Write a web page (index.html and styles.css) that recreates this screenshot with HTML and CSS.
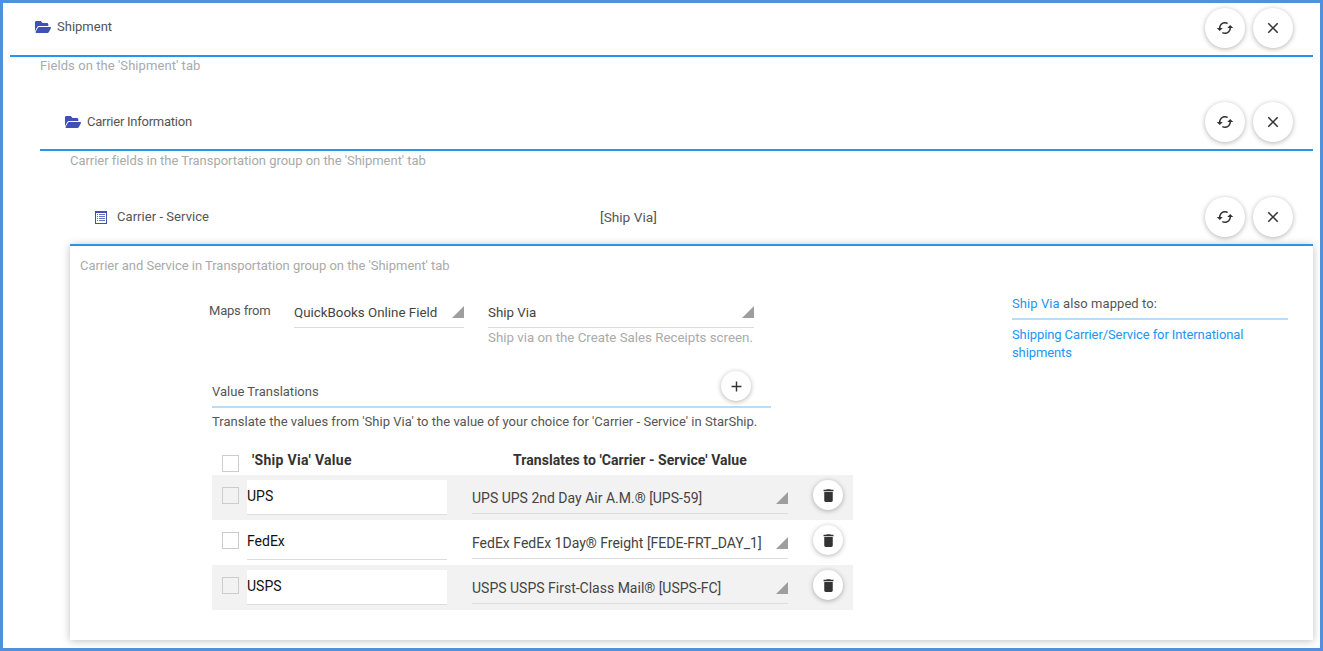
FILE: index.html
```html
<!DOCTYPE html>
<html>

<head>
    <title>Field Mapping</title>
    <link rel="stylesheet" href="styles.css">
</head>

<body>
    <div class="frame">
        <div class="node node-top">
            <div class="node-head">
                <svg class="head-icon" viewBox="0 64 576 384" preserveAspectRatio="none"><path d="M572.694 292.093L500.27 416.248A63.997 63.997 0 0 1 444.989 448H45.025c-18.523 0-30.064-20.093-20.731-36.093l72.424-124.155A64 64 0 0 1 152 256h399.964c18.523 0 30.064 20.093 20.73 36.093zM152 224h328v-48c0-26.51-21.49-48-48-48H272l-64-64H48C21.49 64 0 85.49 0 112v278.046l69.077-118.418C86.214 242.25 117.989 224 152 224z"/></svg>
                <span class="head-title">Shipment</span>
                <div class="head-actions">
                    <button class="round-btn"><svg viewBox="0 0 24 24"><path d="M19 8l-4 4h3c0 3.31-2.69 6-6 6-1.01 0-1.97-.25-2.8-.7l-1.46 1.46C8.97 19.54 10.43 20 12 20c4.42 0 8-3.58 8-8h3l-4-4zM6 12c0-3.31 2.69-6 6-6 1.01 0 1.97.25 2.8.7l1.46-1.46C15.03 4.46 13.57 4 12 4c-4.42 0-8 3.58-8 8H1l4 4 4-4H6z"/></svg></button>
                    <button class="round-btn"><svg viewBox="0 0 24 24"><path d="M19 6.41L17.59 5 12 10.59 6.41 5 5 6.41 10.59 12 5 17.59 6.41 19 12 13.41 17.59 19 19 17.59 13.41 12z"/></svg></button>
                </div>
            </div>
            <div class="node-desc desc-top">Fields on the 'Shipment' tab</div>

            <div class="node node-child">
                <div class="node-head">
                    <svg class="head-icon" viewBox="0 64 576 384" preserveAspectRatio="none"><path d="M572.694 292.093L500.27 416.248A63.997 63.997 0 0 1 444.989 448H45.025c-18.523 0-30.064-20.093-20.731-36.093l72.424-124.155A64 64 0 0 1 152 256h399.964c18.523 0 30.064 20.093 20.73 36.093zM152 224h328v-48c0-26.51-21.49-48-48-48H272l-64-64H48C21.49 64 0 85.49 0 112v278.046l69.077-118.418C86.214 242.25 117.989 224 152 224z"/></svg>
                    <span class="head-title title-carrier">Carrier Information</span>
                    <div class="head-actions">
                        <button class="round-btn"><svg viewBox="0 0 24 24"><path d="M19 8l-4 4h3c0 3.31-2.69 6-6 6-1.01 0-1.97-.25-2.8-.7l-1.46 1.46C8.97 19.54 10.43 20 12 20c4.42 0 8-3.58 8-8h3l-4-4zM6 12c0-3.31 2.69-6 6-6 1.01 0 1.97.25 2.8.7l1.46-1.46C15.03 4.46 13.57 4 12 4c-4.42 0-8 3.58-8 8H1l4 4 4-4H6z"/></svg></button>
                        <button class="round-btn"><svg viewBox="0 0 24 24"><path d="M19 6.41L17.59 5 12 10.59 6.41 5 5 6.41 10.59 12 5 17.59 6.41 19 12 13.41 17.59 19 19 17.59 13.41 12z"/></svg></button>
                    </div>
                </div>
                <div class="node-desc desc-child">Carrier fields in the Transportation group on the 'Shipment' tab</div>

                <div class="node node-child node-leaf">
                    <div class="node-head">
                        <svg class="list-icon" viewBox="0 0 12 13">
                            <path class="list-frame" d="M0 0h12v13H0zM1 2v10h10V2z" fill-rule="evenodd"/>
                            <path class="list-line" d="M2 3h1v1H2zM4 3h6v1H4zM2 5h1v1H2zM4 5h6v1H4zM2 7h1v1H2zM4 7h6v1H4zM2 9h1v1H2zM4 9h6v1H4z"/>
                        </svg>
                        <span class="head-title leaf-title">Carrier - Service</span>
                        <span class="head-value">[Ship Via]</span>
                        <div class="head-actions">
                            <button class="round-btn"><svg viewBox="0 0 24 24"><path d="M19 8l-4 4h3c0 3.31-2.69 6-6 6-1.01 0-1.97-.25-2.8-.7l-1.46 1.46C8.97 19.54 10.43 20 12 20c4.42 0 8-3.58 8-8h3l-4-4zM6 12c0-3.31 2.69-6 6-6 1.01 0 1.97.25 2.8.7l1.46-1.46C15.03 4.46 13.57 4 12 4c-4.42 0-8 3.58-8 8H1l4 4 4-4H6z"/></svg></button>
                            <button class="round-btn"><svg viewBox="0 0 24 24"><path d="M19 6.41L17.59 5 12 10.59 6.41 5 5 6.41 10.59 12 5 17.59 6.41 19 12 13.41 17.59 19 19 17.59 13.41 12z"/></svg></button>
                        </div>
                    </div>

                    <div class="card">
                        <div class="card-desc">Carrier and Service in Transportation group on the 'Shipment' tab</div>
                        <div class="card-body">
                            <div class="card-main">
                                <div class="maps-row">
                                    <span class="maps-label">Maps from</span>
                                    <div class="select select-source">
                                        <span>QuickBooks Online Field</span><i class="caret"></i>
                                    </div>
                                    <div class="select-wrap">
                                        <div class="select select-field">
                                            <span>Ship Via</span><i class="caret"></i>
                                        </div>
                                        <div class="hint">Ship via on the Create Sales Receipts screen.</div>
                                    </div>
                                </div>

                                <div class="vt-head">
                                    <span>Value Translations</span>
                                    <button class="round-btn small-btn"><svg viewBox="0 0 24 24"><path d="M19 13h-6v6h-2v-6H5v-2h6V5h2v6h6v2z"/></svg></button>
                                </div>
                                <div class="vt-note">Translate the values from 'Ship Via' to the value of your choice for 'Carrier - Service' in StarShip.</div>

                                <div class="vt-table">
                                    <div class="vt-columns">
                                        <span class="check"></span>
                                        <span class="col-from">'Ship Via' Value</span>
                                        <span class="col-to">Translates to 'Carrier - Service' Value</span>
                                    </div>
                                    <div class="vt-row">
                                        <span class="check"></span>
                                        <div class="value-input">UPS</div>
                                        <div class="select select-row"><span>UPS UPS 2nd Day Air A.M.® [UPS-59]</span><i class="caret"></i></div>
                                        <button class="round-btn small-btn"><svg viewBox="0 0 24 24"><path d="M6 19c0 1.1.9 2 2 2h8c1.1 0 2-.9 2-2V7H6v12zM19 4h-3.5l-1-1h-5l-1 1H5v2h14V4z"/></svg></button>
                                    </div>
                                    <div class="vt-row">
                                        <span class="check"></span>
                                        <div class="value-input">FedEx</div>
                                        <div class="select select-row"><span>FedEx FedEx 1Day® Freight [FEDE-FRT_DAY_1]</span><i class="caret"></i></div>
                                        <button class="round-btn small-btn"><svg viewBox="0 0 24 24"><path d="M6 19c0 1.1.9 2 2 2h8c1.1 0 2-.9 2-2V7H6v12zM19 4h-3.5l-1-1h-5l-1 1H5v2h14V4z"/></svg></button>
                                    </div>
                                    <div class="vt-row">
                                        <span class="check"></span>
                                        <div class="value-input">USPS</div>
                                        <div class="select select-row"><span>USPS USPS First-Class Mail® [USPS-FC]</span><i class="caret"></i></div>
                                        <button class="round-btn small-btn"><svg viewBox="0 0 24 24"><path d="M6 19c0 1.1.9 2 2 2h8c1.1 0 2-.9 2-2V7H6v12zM19 4h-3.5l-1-1h-5l-1 1H5v2h14V4z"/></svg></button>
                                    </div>
                                </div>
                            </div>

                            <div class="card-side">
                                <div class="side-head"><a class="link">Ship Via</a> also mapped to:</div>
                                <a class="link side-link">Shipping Carrier/Service for International shipments</a>
                            </div>
                        </div>
                    </div>
                </div>
            </div>
        </div>
    </div>
</body>

</html>
```

FILE: styles.css
```css
* {
    box-sizing: border-box;
}

html,
body {
    margin: 0;
    height: 100%;
    overflow: hidden;
}

body {
    font-family: Roboto, "Liberation Sans", sans-serif;
    font-size: 13px;
    color: #555;
    background: #fff;
}

.frame {
    height: 651px;
    border: 3px solid #5290db;
    padding: 0 7px;
    overflow: hidden;
}

.node-child {
    margin-left: 30px;
}

.node-head {
    display: flex;
    align-items: center;
    height: 54px;
    padding: 0 20px 4px 25px;
    border-bottom: 2px solid #2196f3;
}

.node-child > .node-head {
    padding-bottom: 2px;
}

.head-icon {
    width: 16px;
    height: 12px;
    margin-right: 6px;
    fill: #3f51b5;
}

.list-icon {
    flex-shrink: 0;
    width: 12px;
    height: 13px;
    margin-right: 10px;
}

.list-frame {
    fill: #3f51b5;
}

.list-line {
    fill: #6573c3;
}

.head-title {
    line-height: 16px;
}

.title-carrier {
    letter-spacing: -0.25px;
}

.leaf-title {
    width: 483px;
    letter-spacing: 0.05px;
}

.head-value {
    font-size: 13.7px;
}

.head-actions {
    display: flex;
    gap: 8px;
    margin-top: 2px;
    margin-left: auto;
}

.node-child .head-actions {
    margin-top: 0;
}

.round-btn {
    display: flex;
    align-items: center;
    justify-content: center;
    width: 40px;
    height: 40px;
    padding: 0;
    border: none;
    border-radius: 50%;
    background: #fff;
    box-shadow: 0 1px 5px rgba(0, 0, 0, 0.3);
}

.round-btn svg {
    width: 18px;
    height: 18px;
    fill: #333;
}

.small-btn {
    width: 30px;
    height: 30px;
}

.small-btn svg {
    width: 17px;
    height: 17px;
}

.node-desc {
    height: 40px;
    padding: 1px 0 0 30px;
    line-height: 16px;
    color: #aaa;
}

.desc-top {
    letter-spacing: 0.07px;
}

.desc-child {
    height: 41px;
    padding-top: 2px;
    letter-spacing: -0.03px;
}

.card {
    height: 396px;
    margin-top: -2px;
    border-top: 2px solid #2196f3;
    background: #fff;
    box-shadow: 0 1px 8px rgba(0, 0, 0, 0.25);
}

.card-desc {
    padding: 12px 0 0 10px;
    line-height: 16px;
    letter-spacing: -0.03px;
    color: #aaa;
}

.card-body {
    display: flex;
    padding-left: 139px;
}

.card-main {
    flex-shrink: 0;
    width: 803px;
}

.maps-row {
    display: flex;
    padding-top: 25px;
}

.maps-label {
    width: 85px;
    padding-top: 4px;
    line-height: 16px;
    letter-spacing: -0.2px;
}

.select {
    display: flex;
    align-items: flex-start;
    justify-content: space-between;
    border-bottom: 1px solid #ddd;
    color: #444;
}

.select-source {
    width: 170px;
    height: 29px;
    margin-right: 24px;
    padding-top: 6px;
    font-size: 13.35px;
}

.select-wrap {
    width: 266px;
}

.select-field {
    height: 29px;
    padding-top: 6px;
    font-size: 13.35px;
}

.caret {
    display: block;
    width: 12px;
    height: 12px;
    margin-top: 1px;
    background: #9e9e9e;
    clip-path: polygon(100% 0, 100% 100%, 0 100%);
}

.hint {
    padding-top: 2px;
    font-size: 13.3px;
    line-height: 16px;
    color: #aaa;
}

.vt-head {
    display: flex;
    align-items: flex-end;
    justify-content: space-between;
    width: 559px;
    height: 43px;
    margin: 19px 0 0 3px;
    padding: 0 20px 5px 0;
    border-bottom: 2px solid #b9dcf8;
}

.vt-head span {
    padding-bottom: 2px;
}

.vt-note {
    padding: 6px 0 0 3px;
    line-height: 16px;
    letter-spacing: 0.02px;
}

.vt-table {
    width: 641px;
    margin: 15px 0 0 3px;
}

.vt-columns {
    display: flex;
    align-items: center;
    height: 30px;
    padding-left: 10px;
    font-size: 14px;
    font-weight: bold;
    color: #333;
}

.vt-columns .check {
    margin-top: 7px;
}

.check {
    display: block;
    width: 17px;
    height: 17px;
    border: 1px solid #ccc;
    background: #fff;
}

.col-from {
    width: 261px;
    margin-left: 13px;
    letter-spacing: 0.3px;
}

.col-to {
    letter-spacing: 0.05px;
}

.vt-row {
    display: flex;
    align-items: center;
    height: 45px;
    padding-left: 10px;
}

.vt-row:nth-child(even) {
    background: #f2f2f2;
}

.vt-row .check {
    margin-bottom: 4px;
    background: transparent;
}

.vt-row:nth-child(odd) .check {
    background: #fff;
}

.value-input {
    width: 200px;
    height: 35px;
    margin: 0 25px 0 8px;
    padding-top: 8px;
    border-bottom: 1px solid #ddd;
    background: #fff;
    font-size: 14px;
    line-height: 16px;
    color: #111;
}

.select-row {
    width: 316px;
    height: 34px;
    margin: 0 25px 1px 0;
    padding-top: 10px;
    font-size: 14px;
}

.select-row .caret {
    margin-top: 2px;
}

.vt-row .small-btn {
    margin-bottom: 5px;
}

.card-side {
    width: 276px;
    padding-top: 22px;
}

.side-head {
    padding-bottom: 6px;
    border-bottom: 2px solid #b9dcf8;
    line-height: 16px;
    letter-spacing: 0.08px;
}

.link {
    color: #2196f3;
}

.side-link {
    display: block;
    padding-top: 6px;
    line-height: 18px;
    letter-spacing: -0.1px;
}
```
